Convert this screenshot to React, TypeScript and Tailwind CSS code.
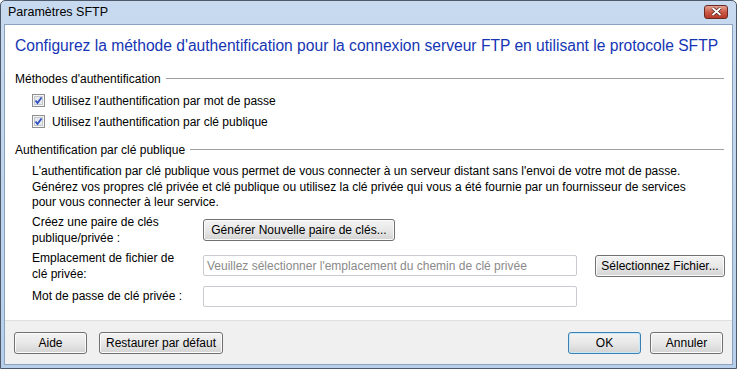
const FONT = { fontFamily: '"Liberation Sans", Arial, sans-serif' };

const CheckBox = () => (
	<svg width="13" height="13" viewBox="0 0 13 13" className="shrink-0">
		<rect x="0.5" y="0.5" width="12" height="12" fill="#f4f4f4" stroke="#8e8f8f" />
		<rect x="2.5" y="2.5" width="8" height="8" fill="#e6eaee" stroke="#c4c8cc" />
		<path d="M3.5 6.5 L5.5 9 L9.5 3.5" fill="none" stroke="#2f4ec0" strokeWidth="1.8" />
	</svg>
);

interface BtnProps {
	label: string;
	className?: string;
	primary?: boolean;
}

const WinButton = ({ label, className = "", primary = false }: BtnProps) => (
	<button
		type="button"
		className={`h-[22px] rounded-[3px] border text-[12px] text-black bg-gradient-to-b from-[#f3f3f3] via-[#e8e8e8] to-[#d3d3d3] ${
			primary ? "border-[#3c7fb1] shadow-[inset_0_0_0_1px_#c6e8f8]" : "border-[#707070] shadow-[inset_0_0_0_1px_#fbfbfb]"
		} ${className}`}
	>
		{label}
	</button>
);

const GroupTitle = ({ label }: { label: string }) => (
	<div className="flex items-center gap-[5px] h-[15px] pr-[8px]">
		<span className="whitespace-nowrap">{label}</span>
		<div className="flex-1 h-px bg-[#a0a0a0]" />
	</div>
);

const App = () => {
	return (
		<div className="w-[739px] h-[370px] bg-white text-[12px] text-black" style={FONT}>
			<div className="w-[737px] h-[369px] flex flex-col border border-[#4d5a6b] rounded-t-[5px] bg-gradient-to-b from-[#c8daef] to-[#b7cfe9] overflow-hidden">
				<div className="h-[23px] shrink-0 flex items-center justify-between pl-[7px] pr-[8px]">
					<span className="text-[12.5px] text-black">Paramètres SFTP</span>
					<div className="w-[24px] h-[14px] mt-[-2px] rounded-[3px] border border-[#6b2a22] bg-gradient-to-b from-[#e3a293] via-[#cc5a47] to-[#b6392a] flex items-center justify-center">
						<svg width="11" height="9" viewBox="0 0 11 9">
							<path d="M1.5 1 L9.5 8 M9.5 1 L1.5 8" stroke="#4a1a14" strokeWidth="3.2" />
							<path d="M1.5 1 L9.5 8 M9.5 1 L1.5 8" stroke="#ffffff" strokeWidth="1.8" />
						</svg>
					</div>
				</div>
				<div className="flex-1 flex flex-col mx-[3px] mb-[3px] border border-[#8aa3c2] bg-white">
					<div className="flex-1 flex flex-col pl-[10px] pt-[11px]">
						<h1 className="text-[15.6px] leading-[20px] text-[#1535b4] whitespace-nowrap">
							Configurez la méthode d'authentification pour la connexion serveur FTP en utilisant le protocole SFTP
						</h1>
						<div className="mt-[15px]">
							<GroupTitle label="Méthodes d'authentification" />
						</div>
						<div className="flex flex-col pl-[17px] mt-[4px]">
							<label className="flex items-center gap-[7px] h-[21px]">
								<CheckBox />
								<span>Utilisez l'authentification par mot de passe</span>
							</label>
							<label className="flex items-center gap-[7px] h-[21px]">
								<CheckBox />
								<span>Utilisez l'authentification par clé publique</span>
							</label>
						</div>
						<div className="mt-[10px]">
							<GroupTitle label="Authentification par clé publique" />
						</div>
						<div className="pl-[17px] mt-[7px]">
							<p className="leading-[15.5px] pr-[20px]">
								L'authentification par clé publique vous permet de vous connecter à un serveur distant sans l'envoi de votre mot de passe.
								<br />
								Générez vos propres clé privée et clé publique ou utilisez la clé privée qui vous a été fournie par un fournisseur de services
								<br />
								pour vous connecter à leur service.
							</p>
							<div className="grid grid-cols-[171px_374px_18px_130px] gap-y-[4px] items-center mt-[3px]">
								<div className="leading-[16px]">
									Créez une paire de clés
									<br />
									publique/privée :
								</div>
								<div className="col-span-3">
									<WinButton label="Générer Nouvelle paire de clés..." className="w-[192px]" />
								</div>
								<div className="leading-[16px]">
									Emplacement de fichier de
									<br />
									clé privée:
								</div>
								<div className="h-[21px] border border-[#c8cbd0] rounded-[2px] flex items-center px-[3px] text-[#8a8a8a]">
									Veuillez sélectionner l'emplacement du chemin de clé privée
								</div>
								<div />
								<WinButton label="Sélectionnez Fichier..." className="w-[130px]" />
								<div className="leading-[16px] h-[20px] flex items-center">Mot de passe de clé privée :</div>
								<div className="h-[21px] border border-[#c8cbd0] rounded-[2px]" />
							</div>
						</div>
					</div>
					<div className="h-[44px] shrink-0 border-t border-[#dfdfdf] bg-[#f0f0f0] flex items-center px-[9px]">
						<WinButton label="Aide" className="w-[73px]" />
						<WinButton label="Restaurer par défaut" className="w-[124px] ml-[12px]" />
						<div className="flex-1" />
						<WinButton label="OK" className="w-[73px]" primary />
						<WinButton label="Annuler" className="w-[73px] ml-[9px]" />
					</div>
				</div>
			</div>
		</div>
	);
};

export default App;
